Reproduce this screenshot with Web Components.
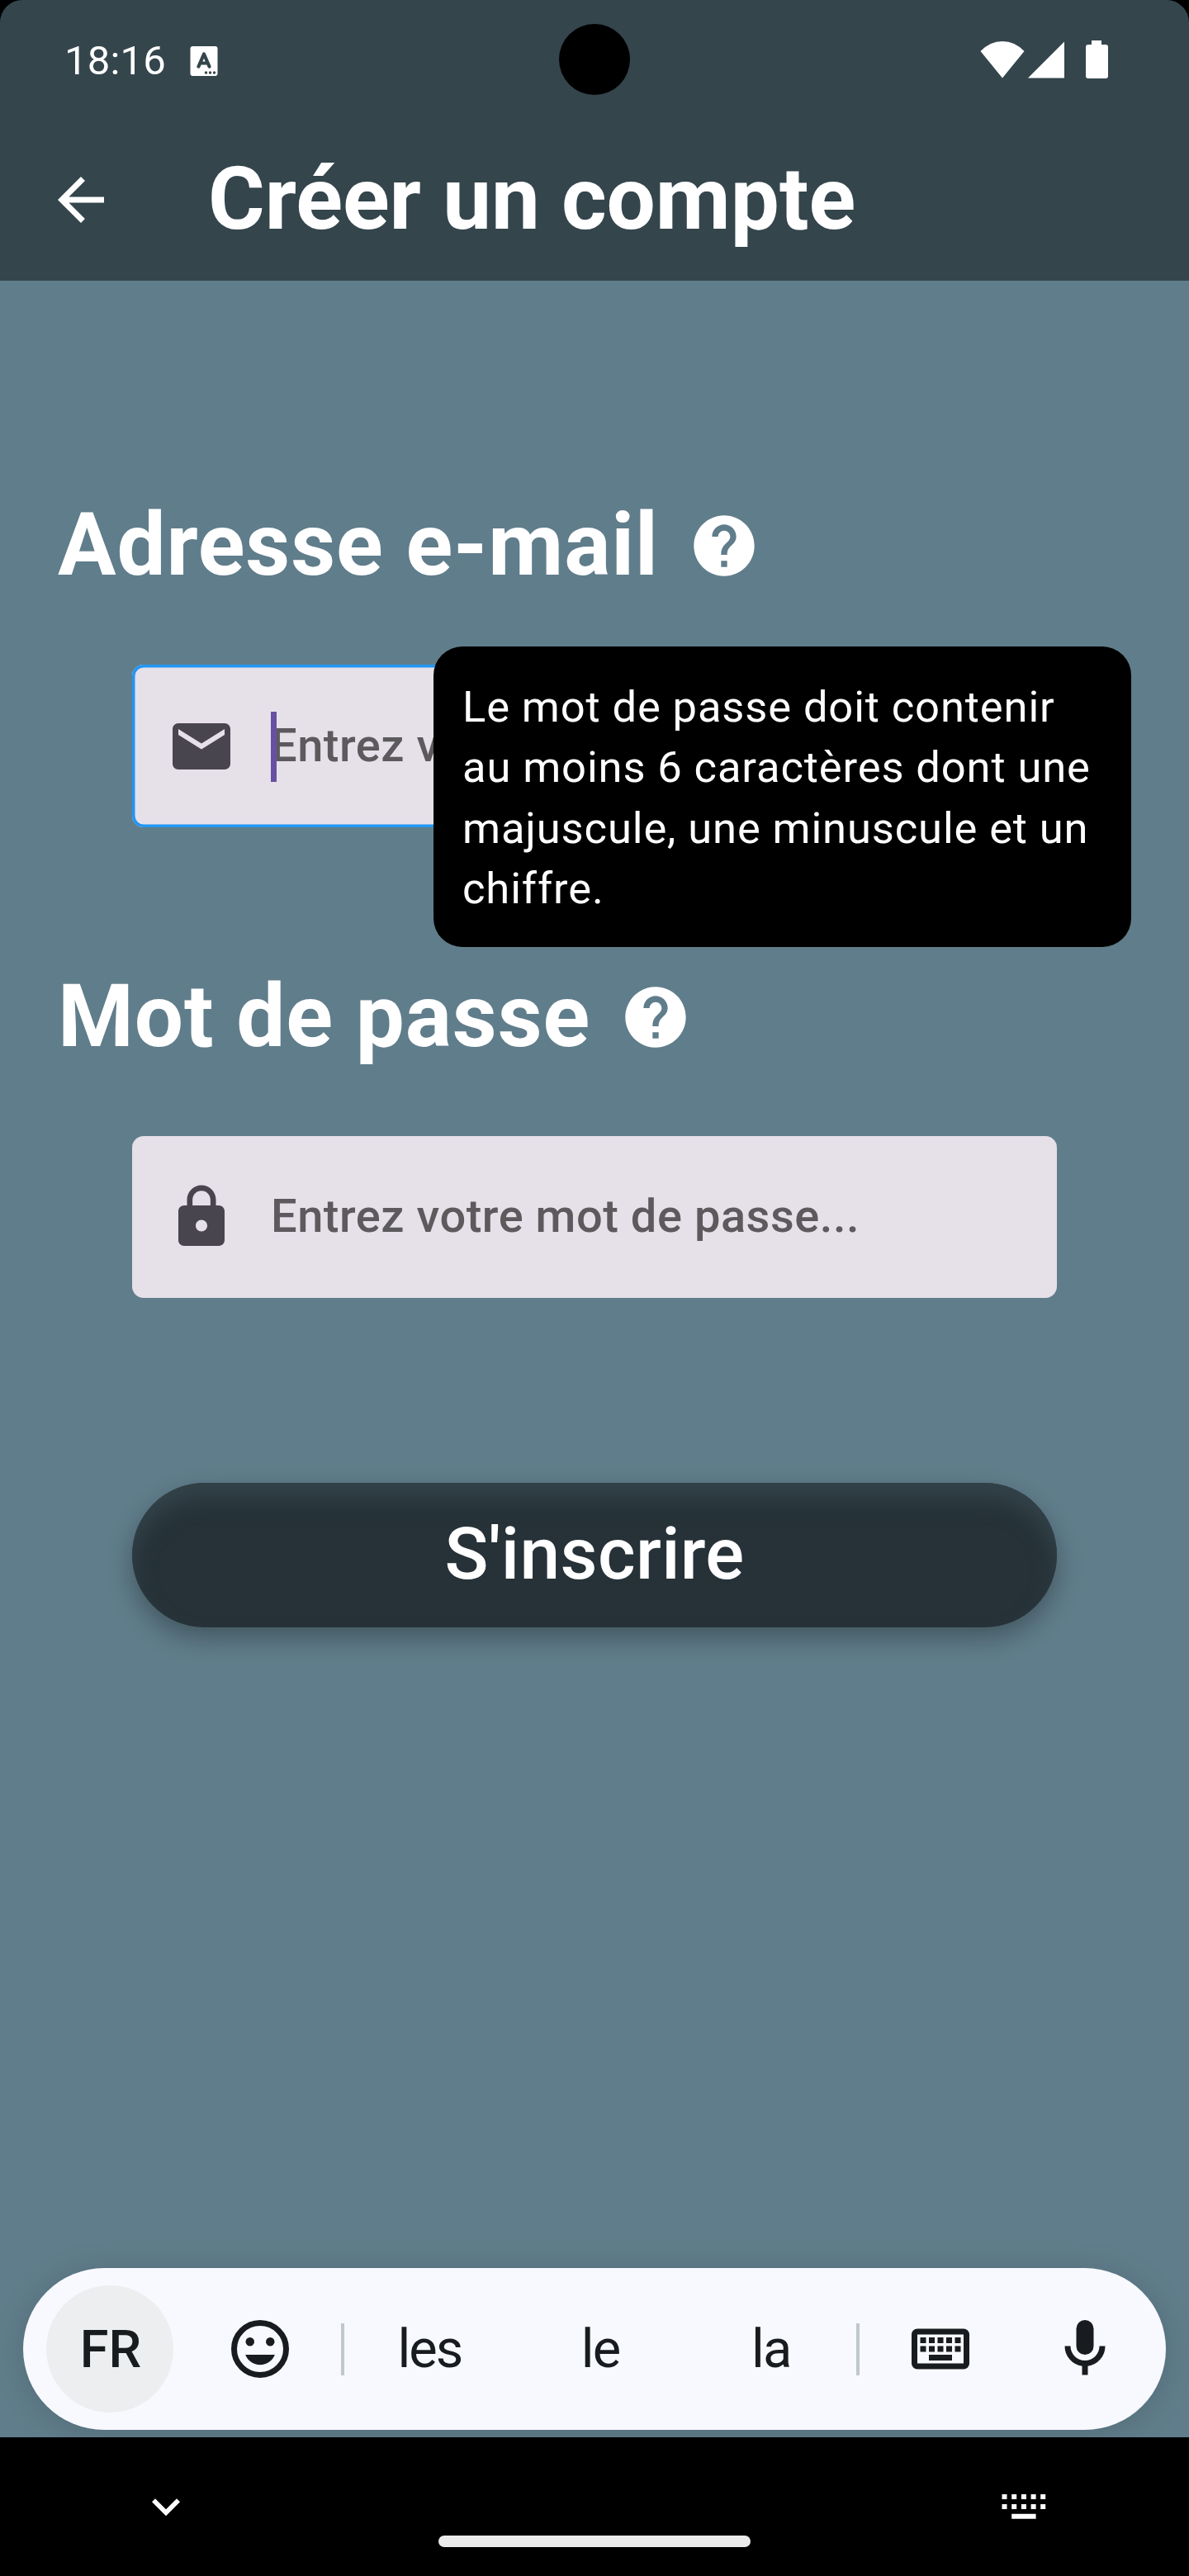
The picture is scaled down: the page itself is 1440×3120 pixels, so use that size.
<!DOCTYPE html>
<html lang="fr">
<head>
<meta charset="utf-8">
<title>Créer un compte</title>
<style>
html,body{margin:0;padding:0;background:#000}
body{width:1440px;height:3120px;overflow:hidden;font-family:Roboto,"Liberation Sans",sans-serif;-webkit-font-smoothing:antialiased}
</style>
</head>
<body>
<signup-screen></signup-screen>
<script>
const define = (name, html) => customElements.define(name, class extends HTMLElement {
  constructor() {
    super();
    const t = document.createElement('template');
    t.innerHTML = html;
    this.attachShadow({mode: 'open'}).appendChild(t.content.cloneNode(true));
  }
});

const ICONS = {
  back: '<path d="M20 11H7.83l5.59-5.59L12 4l-8 8 8 8 1.41-1.41L7.83 13H20v-2z"/>',
  help: '<path d="M12 2C6.48 2 2 6.48 2 12s4.48 10 10 10 10-4.48 10-10S17.52 2 12 2zm1 17h-2v-2h2v2zm2.07-7.75l-.9.92C13.45 12.9 13 13.5 13 15h-2v-.5c0-1.1.45-2.1 1.17-2.83l1.24-1.26c.37-.36.59-.86.59-1.41 0-1.1-.9-2-2-2s-2 .9-2 2H8c0-2.21 1.79-4 4-4s4 1.79 4 4c0 .88-.36 1.68-.93 2.25z"/>',
  mail: '<path d="M20 4H4c-1.1 0-1.99.9-1.99 2L2 18c0 1.1.9 2 2 2h16c1.1 0 2-.9 2-2V6c0-1.1-.9-2-2-2zm0 4l-8 5-8-5V6l8 5 8-5v2z"/>',
  lock: '<path d="M18 8h-1V6c0-2.76-2.24-5-5-5S7 3.24 7 6v2H6c-1.1 0-2 .9-2 2v10c0 1.1.9 2 2 2h12c1.1 0 2-.9 2-2V10c0-1.1-.9-2-2-2zm-6 9c-1.1 0-2-.9-2-2s.9-2 2-2 2 .9 2 2-.9 2-2 2zm3.1-9H8.9V6c0-1.71 1.39-3.1 3.1-3.1 1.71 0 3.1 1.39 3.1 3.1v2z"/>',
  mood: '<circle cx="12" cy="12" r="9" fill="none" stroke="currentColor" stroke-width="2"/><circle cx="8.5" cy="9.5" r="1.5"/><circle cx="15.5" cy="9.5" r="1.5"/><path d="M12 17.5c2.33 0 4.31-1.46 5.11-3.5H6.89c.8 2.04 2.78 3.5 5.11 3.5z"/>',
  keyboard: '<rect x="3" y="6" width="18" height="12" rx="1" fill="none" stroke="currentColor" stroke-width="2"/><path d="M5 8h2v2H5zM8 8h2v2H8zM11 8h2v2h-2zM14 8h2v2h-2zM17 8h2v2h-2zM5 11h2v2H5zM8 11h2v2H8zM11 11h2v2h-2zM14 11h2v2h-2zM17 11h2v2h-2zM8 14h8v2H8z"/>',
  mic: '<path d="M12 14q-1.25 0-2.125-.875T9 11V5q0-1.25.875-2.125T12 2t2.125.875T15 5v6q0 1.25-.875 2.125T12 14m-1 7v-3.075q-2.6-.35-4.3-2.325T5 11h2q0 2.075 1.463 3.538T12 16t3.538-1.463T17 11h2q0 2.625-1.7 4.6T13 17.925V21z"/>',
  expand: '<path d="M16.59 8.59L12 13.17 7.41 8.59 6 10l6 6 6-6z"/>'
};
customElements.define('md-icon', class extends HTMLElement {
  constructor() {
    super();
    this.attachShadow({mode: 'open'});
  }
  connectedCallback() {
    this.shadowRoot.innerHTML = '<style>:host{display:block;flex:none;width:84px;height:84px}svg{display:block;width:100%;height:100%;fill:currentColor}</style><svg viewBox="0 0 24 24">' + ICONS[this.getAttribute('name')] + '</svg>';
  }
});

define('status-bar', `<style>
:host{display:flex;align-items:center;justify-content:space-between;height:144px;box-sizing:border-box;padding:0 98px 0 78px;color:#fff;position:relative}
.left{display:flex;align-items:center;padding-top:3px}
.time{width:152px;font-size:49px;line-height:58px;letter-spacing:.2px;white-space:nowrap}
svg{display:block;flex:none}
.cam{position:absolute;left:677px;top:29px;width:86px;height:86px;border-radius:50%;background:#000}
.right{display:flex;align-items:flex-start}
</style>
<div class="left"><span class="time">18:16</span>
<svg width="34" height="38" viewBox="0 0 34 38"><rect x=".5" y="1" width="33" height="36" rx="3" fill="#fff"/><path d="M10.500 25.500L17 10.500l6.500 15M12.500 21.500h9" fill="none" stroke="#34454c" stroke-width="4.200" stroke-linecap="round" stroke-linejoin="round"/><g fill="#34454c"><circle cx="19.500" cy="33" r="1.700"/><circle cx="24.500" cy="33" r="1.700"/><circle cx="29.500" cy="33" r="1.700"/></g></svg></div>
<div class="cam"></div>
<div class="right"><svg width="155" height="46" viewBox="0 0 155 46" fill="#fff"><path d="M0.500 13Q12 1 27 1T53.500 13L27 45.500z"/><path d="M58 45.500L102 1.500v44z"/><path d="M135 0h12v5h5q3 0 3 3v35q0 3-3 3h-21q-3 0-3-3V8q0-3 3-3h4z"/></svg></div>`);

define('app-bar', `<style>
:host{display:flex;align-items:center;height:196px;padding-left:56px;gap:112px;box-sizing:border-box;color:#fff}
.t{font-size:105px;font-weight:700;line-height:123px;padding-bottom:2px;white-space:nowrap}
</style><md-icon name="back"></md-icon><div class="t"><slot></slot></div>`);

define('field-label', `<style>
:host{display:flex;align-items:center;height:122px;padding-left:70px;gap:35px;color:#fff;font-size:105px;font-weight:700;line-height:122px;letter-spacing:.875px;white-space:nowrap}
md-icon{width:88px;height:88px}
</style><span><slot></slot></span><md-icon name="help"></md-icon>`);

customElements.define('text-field', class extends HTMLElement {
  constructor() {
    super();
    this.attachShadow({mode: 'open'});
  }
  connectedCallback() {
    this.shadowRoot.innerHTML = `<style>
:host{display:flex;align-items:center;height:196px;margin:0 160px;padding:0 42px;gap:42px;box-sizing:border-box;background:#e6e0e9;border-radius:14px;color:#49454f}
:host([focused]){height:197px;box-shadow:inset 0 0 0 3.500px #2196f3}
.in{display:flex;align-items:center;position:relative;height:84px}
.hint{font-size:56px;font-weight:500;line-height:84px;padding-bottom:2px;letter-spacing:.525px;white-space:nowrap;color:#5c5a5d}
.caret{display:none;position:absolute;left:0;top:0;width:7px;height:85px;background:#6750a4}
:host([focused]) .caret{display:block}
</style><md-icon name="${this.getAttribute('icon')}"></md-icon><div class="in"><span class="hint"><slot></slot></span><i class="caret"></i></div>`;
  }
});

define('tool-tip', `<style>
:host{display:block;position:absolute;left:525px;top:443px;width:845px;height:364px;box-sizing:border-box;padding:36.500px 35px 0;background:#000;border-radius:35px;color:#fff;font-size:52.500px;line-height:73.500px;letter-spacing:.875px;z-index:2}
</style><slot></slot>`);

define('pill-button', `<style>
:host{display:flex;align-items:center;justify-content:center;height:175px;margin:0 160px;padding-bottom:3px;box-sizing:border-box;border-radius:88px;background:#263238;color:#fff;font-size:87.500px;font-weight:500;line-height:104px;letter-spacing:.35px;box-shadow:inset 0 19px 26px #334249,0 13px 30px rgba(0,0,0,.3)}
</style><span><slot></slot></span>`);

define('suggestion-strip', `<style>
:host{display:flex;align-items:center;height:196px;margin:0 28px 9px;padding:0 56px 0 28px;box-sizing:border-box;border-radius:98px;background:#f8f9fe;color:#191c1e;box-shadow:0 4px 40px rgba(0,0,0,.13)}
.lang{display:flex;align-items:center;justify-content:center;flex:none;width:154px;height:154px;box-sizing:border-box;padding-left:2px;border-radius:50%;background:#eceeef;font-size:63px;font-weight:500}
.mood{margin:0 56px 0 63px}
.bar{flex:none;width:4px;height:63px;background:#bfc8cc}
.words{display:flex;width:620px}
.words span{flex:1;text-align:center;font-size:65px;line-height:76px;letter-spacing:-2px}
.kb{margin:0 91px 0 56px}
</style><div class="lang">FR</div><md-icon class="mood" name="mood"></md-icon><i class="bar"></i><div class="words"><span>les</span><span>le</span><span>la</span></div><i class="bar"></i><md-icon class="kb" name="keyboard"></md-icon><md-icon name="mic"></md-icon>`);

define('nav-bar', `<style>
:host{display:flex;flex-direction:column;height:168px;background:#000;color:#fff}
.row{display:flex;justify-content:space-between;align-items:flex-start;height:119px;padding:50px 173px 0 167px;box-sizing:border-box}
md-icon{width:68px;height:68px}
.kb{display:block;margin-top:19px}
.handle{width:378px;height:14px;border-radius:7px;background:#ebebeb;align-self:center}
</style><div class="row"><md-icon name="expand"></md-icon><svg class="kb" width="54" height="30" viewBox="0 0 54 30" fill="#fff"><path d="M.5 0h6v6h-6zM12.200 0h6v6h-6zM23.900 0h6v6h-6zM35.600 0h6v6h-6zM47.200 0h6v6h-6zM.5 12h6v6h-6zM12.200 12h6v6h-6zM23.900 12h6v6h-6zM35.600 12h6v6h-6zM47.200 12h6v6h-6zM12.200 23.700h29.400v6H12.200z"/></svg></div><div class="handle"></div>`);

define('signup-screen', `<style>
:host{display:flex;flex-direction:column;width:1440px;height:3120px;background:#000;overflow:hidden}
header{background:#34454c;border-radius:27px 27px 0 0;height:340px}
main{position:relative;display:flex;flex-direction:column;height:2612px;padding-top:260px;box-sizing:border-box;background:#607d8b;overflow:hidden}
text-field{margin-top:83px}
.second{margin-top:169px}
pill-button{margin-top:224px}
suggestion-strip{margin-top:auto}
</style>
<header><status-bar></status-bar><app-bar>Créer un compte</app-bar></header>
<main>
<field-label>Adresse e-mail</field-label>
<text-field icon="mail" focused>Entrez v</text-field>
<field-label class="second">Mot de passe</field-label>
<text-field icon="lock">Entrez votre mot de passe...</text-field>
<pill-button>S'inscrire</pill-button>
<tool-tip>Le mot de passe doit contenir au moins 6 caractères dont une majuscule, une minuscule et un chiffre.</tool-tip>
<suggestion-strip></suggestion-strip>
</main>
<nav-bar></nav-bar>`);
</script>
</body>
</html>
